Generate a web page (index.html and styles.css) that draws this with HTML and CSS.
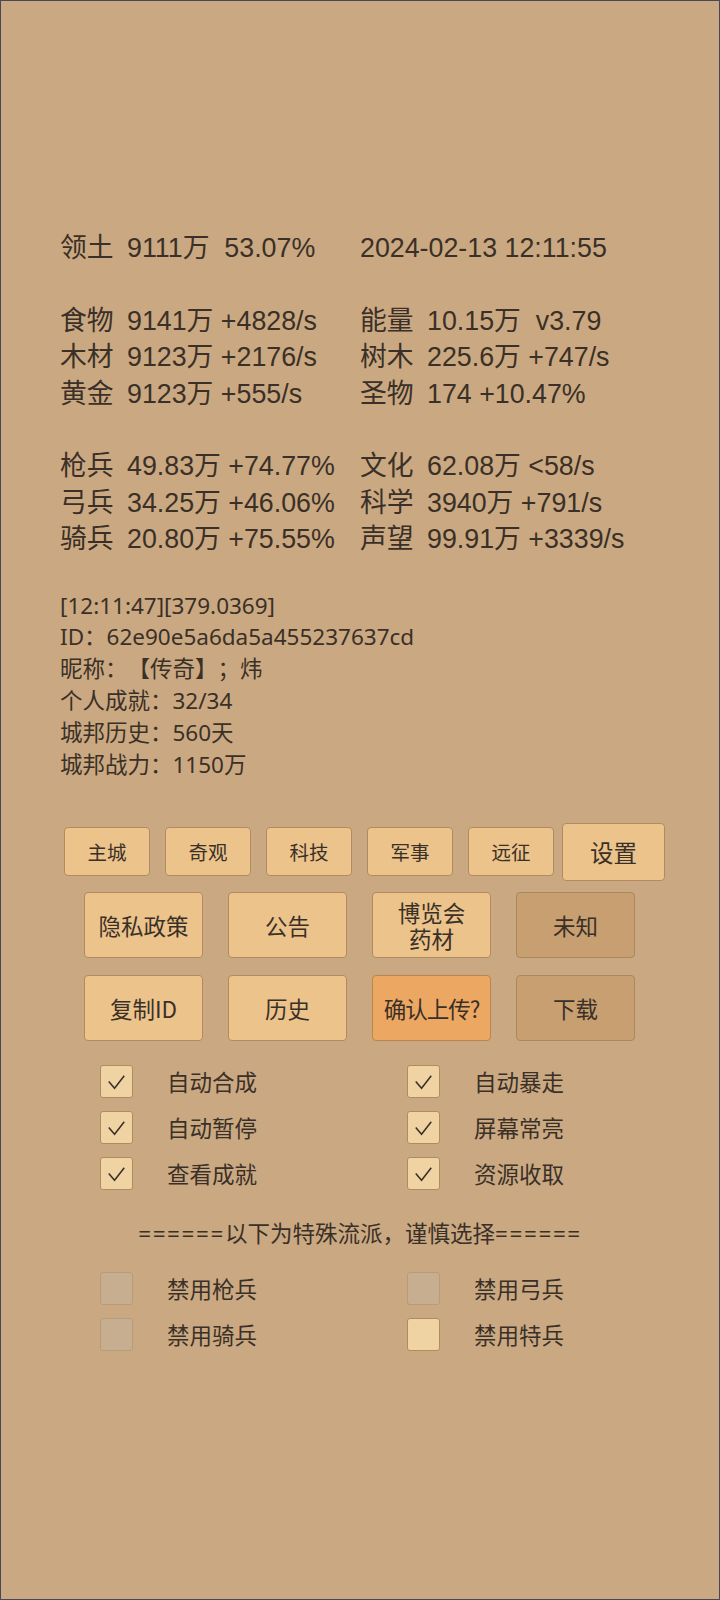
FILE: index.html
```html
<!DOCTYPE html>
<html lang="zh">
<head>
  <meta charset="UTF-8">
  <meta name="viewport" content="width=device-width, initial-scale=1.0">
  <title>城邦</title>
  <link rel="stylesheet" href="styles.css">
</head>
<body>

<div class="screen">

  <div class="stats">
    <div class="row">
      <div class="cell"><span class="label">领土</span>9111万  53.07%</div>
      <div class="cell">2024-02-13 12:11:55</div>
    </div>
    <div class="row blank"></div>
    <div class="row">
      <div class="cell"><span class="label">食物</span>9141万 +4828/s</div>
      <div class="cell"><span class="label">能量</span>10.15万  v3.79</div>
    </div>
    <div class="row">
      <div class="cell"><span class="label">木材</span>9123万 +2176/s</div>
      <div class="cell"><span class="label">树木</span>225.6万 +747/s</div>
    </div>
    <div class="row">
      <div class="cell"><span class="label">黄金</span>9123万 +555/s</div>
      <div class="cell"><span class="label">圣物</span>174 +10.47%</div>
    </div>
    <div class="row blank"></div>
    <div class="row">
      <div class="cell"><span class="label">枪兵</span>49.83万 +74.77%</div>
      <div class="cell"><span class="label">文化</span>62.08万 &lt;58/s</div>
    </div>
    <div class="row">
      <div class="cell"><span class="label">弓兵</span>34.25万 +46.06%</div>
      <div class="cell"><span class="label">科学</span>3940万 +791/s</div>
    </div>
    <div class="row">
      <div class="cell"><span class="label">骑兵</span>20.80万 +75.55%</div>
      <div class="cell"><span class="label">声望</span>99.91万 +3339/s</div>
    </div>
  </div>

  <div class="info">
    <div>[12:11:47][379.0369]</div>
    <div>ID：62e90e5a6da5a455237637cd</div>
    <div>昵称：【传奇】；炜</div>
    <div>个人成就：32/34</div>
    <div>城邦历史：560天</div>
    <div>城邦战力：1150万</div>
  </div>

  <div class="tabs">
    <button class="tab">主城</button>
    <button class="tab">奇观</button>
    <button class="tab">科技</button>
    <button class="tab">军事</button>
    <button class="tab">远征</button>
    <button class="tab tab-big">设置</button>
  </div>

  <div class="actions">
    <button class="btn">隐私政策</button>
    <button class="btn">公告</button>
    <button class="btn btn-two">博览会<br>药材</button>
    <button class="btn btn-dim">未知</button>
  </div>
  <div class="actions second">
    <button class="btn">复制ID</button>
    <button class="btn">历史</button>
    <button class="btn btn-hot">确认上传?</button>
    <button class="btn btn-dim">下载</button>
  </div>

  <div class="options">
    <div class="opt"><span class="box on"><svg viewBox="0 0 32 32"><polyline points="8,16 14,23 24,10"/></svg></span>自动合成</div>
    <div class="opt"><span class="box on"><svg viewBox="0 0 32 32"><polyline points="8,16 14,23 24,10"/></svg></span>自动暴走</div>
    <div class="opt"><span class="box on"><svg viewBox="0 0 32 32"><polyline points="8,16 14,23 24,10"/></svg></span>自动暂停</div>
    <div class="opt"><span class="box on"><svg viewBox="0 0 32 32"><polyline points="8,16 14,23 24,10"/></svg></span>屏幕常亮</div>
    <div class="opt"><span class="box on"><svg viewBox="0 0 32 32"><polyline points="8,16 14,23 24,10"/></svg></span>查看成就</div>
    <div class="opt"><span class="box on"><svg viewBox="0 0 32 32"><polyline points="8,16 14,23 24,10"/></svg></span>资源收取</div>
  </div>

  <div class="divider"><span class="eq">======</span>以下为特殊流派，谨慎选择<span class="eq">======</span></div>

  <div class="options special">
    <div class="opt"><span class="box off"></span>禁用枪兵</div>
    <div class="opt"><span class="box off"></span>禁用弓兵</div>
    <div class="opt"><span class="box off"></span>禁用骑兵</div>
    <div class="opt"><span class="box"></span>禁用特兵</div>
  </div>

</div>

</body>
</html>
```

FILE: styles.css
```css
body {
  margin: 0;
  background-color: #caa982;
}
.screen {
  box-sizing: border-box;
  width: 720px;
  height: 1600px;
  border: 1px solid #464a54;
  background-color: #caa982;
  color: #3a3027;
  padding-top: 229px;
  font-family: "Noto Sans", "Noto Sans CJK SC", sans-serif;
  text-spacing-trim: space-all;
}
.stats {
  padding-left: 59px;
  font-family: "Liberation Sans", "Noto Sans CJK SC", sans-serif;
  font-size: 26.8px;
}
.row {
  display: grid;
  grid-template-columns: 300px 1fr;
  height: 36.4px;
  line-height: 36.4px;
}
.cell {
  white-space: pre;
}
.label {
  display: inline-block;
  width: 67px;
}
.info {
  margin-top: 32px;
  padding-left: 59px;
  font-size: 22.5px;
  line-height: 31.9px;
}
.tabs {
  display: flex;
  align-items: center;
  gap: 15px;
  margin-top: 42px;
  padding-left: 63px;
  height: 58px;
}
button {
  font-family: "Noto Sans CJK SC", sans-serif;
  color: #3a3027;
  background-color: #ebc38b;
  border: 1px solid #b08b60;
  border-radius: 4px;
  padding: 0;
  cursor: pointer;
}
.tab {
  width: 86px;
  height: 49px;
  font-size: 19.5px;
}
.tab-big {
  width: 103px;
  height: 58px;
  margin-left: -7px;
  font-size: 23.5px;
}
.actions {
  display: flex;
  gap: 25px;
  margin-top: 11px;
  padding-left: 83px;
}
.actions.second {
  margin-top: 17px;
}
.btn {
  width: 119px;
  height: 66px;
  font-size: 22.5px;
}
.btn-two {
  line-height: 26px;
}
.btn-dim {
  background-color: #c79f70;
  border-color: #a9875f;
}
.btn-hot {
  background-color: #eca862;
  border-color: #b88650;
  letter-spacing: -1px;
}
.options {
  display: grid;
  grid-template-columns: 307px 1fr;
  margin-top: 17px;
  padding-left: 99px;
  font-size: 22.5px;
}
.opt {
  display: flex;
  align-items: center;
  gap: 34px;
  height: 46.4px;
}
.box {
  box-sizing: border-box;
  width: 33px;
  height: 33px;
  border: 1px solid #b08b60;
  border-radius: 3px;
  background-color: #f0d3a3;
}
.box svg {
  display: block;
  width: 31px;
  height: 31px;
  fill: none;
  stroke: #3a3027;
  stroke-width: 1.6;
}
.box.off {
  background-color: #c8ae90;
  border-color: #b79c7c;
}
.divider {
  margin-top: 21px;
  text-align: center;
  font-size: 22.5px;
  line-height: 32px;
}
.eq {
  letter-spacing: 1.6px;
}
.special {
  margin-top: 15px;
}
```
